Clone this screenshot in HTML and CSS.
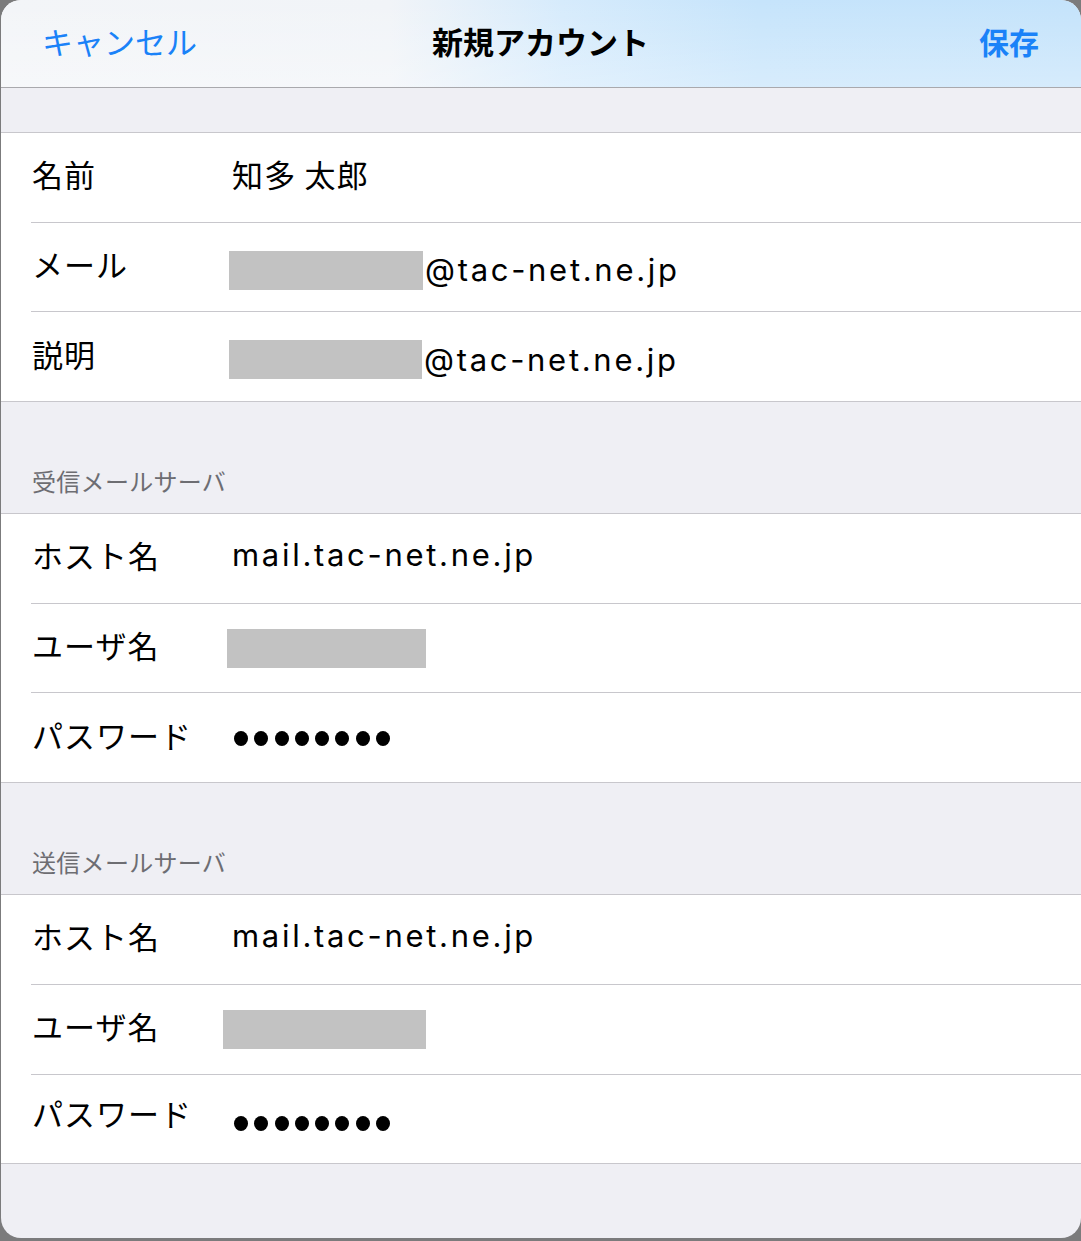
FILE: index.html
```html
<!DOCTYPE html>
<html lang="ja">
<head>
<meta charset="utf-8">
<title>新規アカウント</title>
<link rel="stylesheet" href="styles.css">
</head>
<body>
<div class="sheet">
  <header class="navbar">
    <span class="nav-btn cancel">キャンセル</span>
    <span class="nav-title">新規アカウント</span>
    <span class="nav-btn save">保存</span>
  </header>

  <div class="gap gap-top"></div>

  <section class="group">
    <div class="row">
      <span class="label">名前</span>
      <span class="value jp">知多 太郎</span>
    </div>
    <div class="row">
      <span class="label">メール</span>
      <span class="value low"><span class="redact r-mail"></span>@tac-net.ne.jp</span>
    </div>
    <div class="row">
      <span class="label">説明</span>
      <span class="value low"><span class="redact r-desc"></span>@tac-net.ne.jp</span>
    </div>
  </section>

  <div class="gap section-head">受信メールサーバ</div>

  <section class="group">
    <div class="row">
      <span class="label">ホスト名</span>
      <span class="value text">mail.tac-net.ne.jp</span>
    </div>
    <div class="row">
      <span class="label">ユーザ名</span>
      <span class="value"><span class="redact r-user1"></span></span>
    </div>
    <div class="row">
      <span class="label">パスワード</span>
      <span class="value dots"><i></i><i></i><i></i><i></i><i></i><i></i><i></i><i></i></span>
    </div>
  </section>

  <div class="gap section-head">送信メールサーバ</div>

  <section class="group">
    <div class="row">
      <span class="label">ホスト名</span>
      <span class="value text">mail.tac-net.ne.jp</span>
    </div>
    <div class="row">
      <span class="label">ユーザ名</span>
      <span class="value"><span class="redact r-user2"></span></span>
    </div>
    <div class="row">
      <span class="label label-high">パスワード</span>
      <span class="value dots dots-low"><i></i><i></i><i></i><i></i><i></i><i></i><i></i><i></i></span>
    </div>
  </section>

  <div class="gap gap-bottom"></div>
</div>
</body>
</html>
```

FILE: styles.css
```css
html, body {
  margin: 0;
  padding: 0;
}
body {
  background: #7b7b7c;
  width: 1081px;
  height: 1241px;
  overflow: hidden;
  font-family: "Noto Sans CJK JP", "Noto Sans", sans-serif;
  color: #000;
}
.sheet {
  margin-left: 1px;
  width: 1080px;
  height: 1238px;
  border-radius: 20px;
  overflow: hidden;
  background: #efeff4;
  display: flex;
  flex-direction: column;
}
.navbar {
  box-sizing: border-box;
  height: 88px;
  flex: none;
  border-bottom: 1px solid #a9a9ad;
  display: grid;
  grid-template-columns: 1fr auto 1fr;
  align-items: center;
  padding: 0 42px 6px 41px;
  background:
    linear-gradient(to bottom, rgba(255,255,255,0) 0%, rgba(255,255,255,0.3) 100%),
    linear-gradient(to right, #f3f5f8 0%, #f1f4f8 36%, #d6ebfc 52%, #c6e4fb 70%, #c4e3fb 100%);
}
.nav-btn {
  color: #1a82f8;
  font-size: 31px;
  line-height: 40px;
}
.cancel {
  justify-self: start;
  font-weight: 400;
}
.save {
  justify-self: end;
  font-weight: 700;
  font-size: 30px;
}
.nav-title {
  font-size: 31px;
  font-weight: 700;
  line-height: 40px;
}
.gap {
  flex: none;
}
.gap-top {
  height: 44px;
}
.gap-bottom {
  flex: 1;
}
.section-head {
  height: 111px;
  box-sizing: border-box;
  padding: 0 0 15px 31px;
  display: flex;
  align-items: flex-end;
  font-size: 24px;
  line-height: 34px;
  letter-spacing: 0.3px;
  color: #6d6d72;
}
.group {
  background: #fff;
  border-top: 1px solid #c8c7cc;
  border-bottom: 1px solid #c8c7cc;
  padding-left: 30px;
}
.row {
  height: 88.7px;
  display: flex;
  align-items: center;
}
.row + .row {
  border-top: 1px solid #c8c7cc;
}
.label {
  width: 200px;
  padding-left: 1px;
  padding-bottom: 6px;
  flex: none;
  font-size: 31px;
  letter-spacing: 1px;
  line-height: 40px;
}
.label-high {
  padding-bottom: 12px;
}
.value {
  display: flex;
  align-items: center;
  font-family: "Inter", "Noto Sans CJK JP", sans-serif;
  font-size: 31px;
  letter-spacing: 2.7px;
  line-height: 40px;
}
.value.text {
  padding-bottom: 6px;
}
.value.jp {
  font-family: "Noto Sans CJK JP", sans-serif;
  letter-spacing: 1.2px;
  padding-bottom: 6px;
}
.value.low {
  margin-top: 6px;
}
.redact {
  display: block;
  height: 39px;
  background: #c2c2c2;
  margin-right: 2px;
}
.r-mail { width: 194px; margin-left: -3px; }
.r-desc { width: 193px; margin-left: -3px; }
.r-user1 { width: 199px; margin-left: -5px; }
.r-user2 { width: 203px; margin-left: -9px; }
.dots {
  gap: 6.3px;
  margin-left: 2px;
  margin-top: 2px;
}
.dots i {
  display: block;
  width: 14px;
  height: 15px;
  border-radius: 50%;
  background: #000;
}
.dots-low {
  margin-top: 10px;
}
```
